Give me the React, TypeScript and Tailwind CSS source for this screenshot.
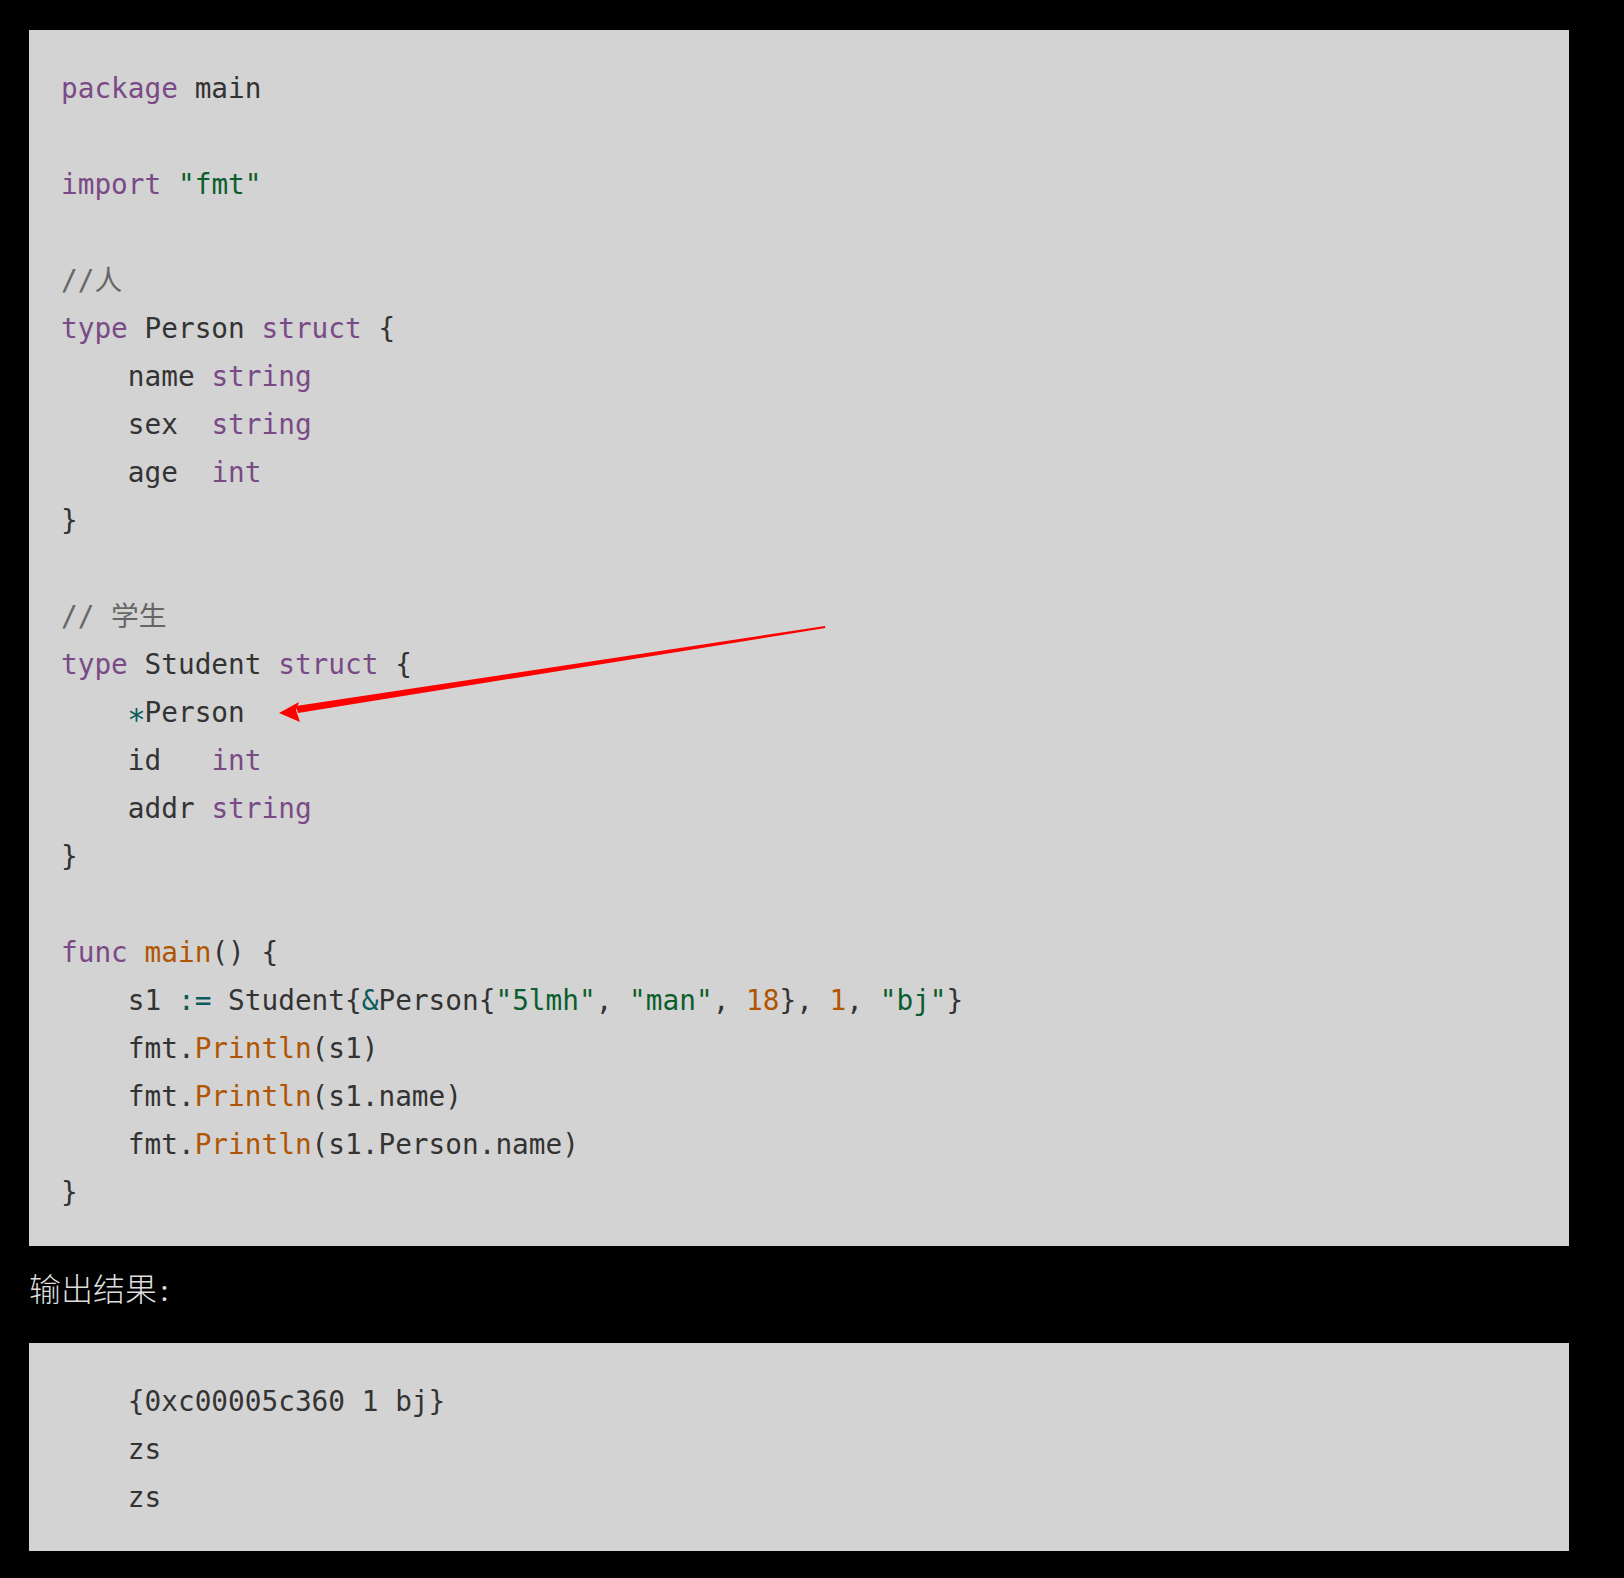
import React from 'react';

type Tok = [string, string?];

const K = 'text-[#7a4a86]'; // keyword
const S = 'text-[#0b5e2c]'; // string
const N = 'text-[#b05500]'; // number / call
const O = 'text-[#0b5c5c]'; // operator
const C = 'text-[#666666]'; // comment
const STAR = 'text-[#0b5c5c] inline-block translate-y-[7px] scale-110';

const code: Tok[][] = [
  [['package', K], [' main']],
  [],
  [['import', K], [' '], ['"fmt"', S]],
  [],
  [['//人', C]],
  [['type', K], [' Person '], ['struct', K], [' {']],
  [['    name '], ['string', K]],
  [['    sex  '], ['string', K]],
  [['    age  '], ['int', K]],
  [['}']],
  [],
  [['// 学生', C]],
  [['type', K], [' Student '], ['struct', K], [' {']],
  [['    '], ['*', STAR], ['Person']],
  [['    id   '], ['int', K]],
  [['    addr '], ['string', K]],
  [['}']],
  [],
  [['func', K], [' '], ['main', N], ['() {']],
  [
    ['    s1 '],
    [':=', O],
    [' Student{'],
    ['&', O],
    ['Person{'],
    ['"5lmh"', S],
    [', '],
    ['"man"', S],
    [', '],
    ['18', N],
    ['}, '],
    ['1', N],
    [', '],
    ['"bj"', S],
    ['}'],
  ],
  [['    fmt.'], ['Println', N], ['(s1)']],
  [['    fmt.'], ['Println', N], ['(s1.name)']],
  [['    fmt.'], ['Println', N], ['(s1.Person.name)']],
  [['}']],
];

const output = ['    {0xc00005c360 1 bj}', '    zs', '    zs'];

const mono = "font-['DejaVu_Sans_Mono','Noto_Sans_CJK_SC',monospace]";

const CodeBlock = ({ lines }: { lines: Tok[][] }) => (
  <div className={`bg-[#d3d3d3] w-[1540px] px-8 pt-[35px] pb-[29px] text-[27.75px] leading-[48px] text-[#333333] ${mono}`}>
    {lines.map((line, i) => (
      <div key={i} className="whitespace-pre h-[48px]">
        {line.map(([t, c], j) => (
          <span key={j} className={c}>
            {t}
          </span>
        ))}
      </div>
    ))}
  </div>
);

export default function App() {
  return (
    <div className="relative bg-black min-h-[1578px] w-full pl-[29px] pt-[30px]">
      <CodeBlock lines={code} />
      <div className="mt-[20px] h-[48px] leading-[48px] text-[32px] font-light text-[#dedede] font-['Liberation_Serif','Noto_Sans_CJK_SC',serif]">
        输出结果<span className="ml-[3px]">:</span>
      </div>
      <div className="mt-[29px]">
        <CodeBlock lines={output.map((o) => [[o]])} />
      </div>

      {/* red arrow pointing at *Person */}
      <svg
        className="absolute top-0 left-0 pointer-events-none"
        width="1624"
        height="1578"
        viewBox="0 0 1624 1578"
      >
        <polygon points="825,626 825.4,628 298,713 296,706" fill="#ff0000" />
        <polygon points="279,713 299,702 296,710 300,722" fill="#ff0000" />
      </svg>
    </div>
  );
}
